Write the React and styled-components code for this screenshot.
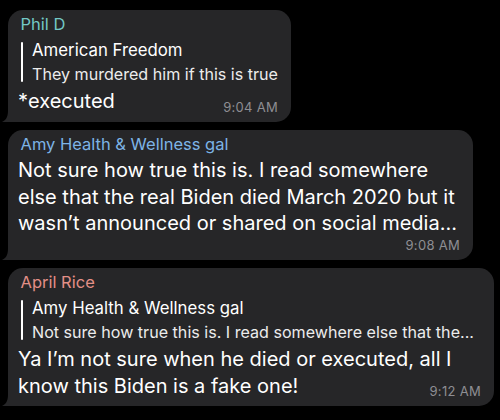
import React from 'react';
import styled, { createGlobalStyle } from 'styled-components';

const GlobalStyle = createGlobalStyle`
  html, body {
    margin: 0;
    background: #000;
  }
  body {
    font-family: "Inter", "Noto Sans", sans-serif;
    -webkit-font-smoothing: antialiased;
  }
`;

const Chat = styled.div`
  display: flex;
  flex-direction: column;
  align-items: flex-start;
  gap: 8px;
  width: 500px;
  height: 420px;
  box-sizing: border-box;
  padding: 10px 0 0 8px;
  overflow: hidden;
`;

const Bubble = styled.div`
  position: relative;
  box-sizing: border-box;
  max-width: ${props => props.$maxWidth}px;
  padding: 4px 13px 7px 10px;
  background: #262628;
  border-radius: 15px 15px 15px 4px;
  color: #fff;
`;

const Tail = styled.svg`
  position: absolute;
  left: -6px;
  bottom: 0;
  display: block;
`;

const Name = styled.div`
  padding-left: 2.5px;
  font-size: 16.5px;
  line-height: 20px;
  color: ${props => props.$color};
  white-space: nowrap;
`;

const Quote = styled.div`
  position: relative;
  margin: 4px 0 0 3px;
  padding-left: 11px;

  &::before {
    content: '';
    position: absolute;
    left: 0;
    top: 4px;
    bottom: 4px;
    width: 2px;
    border-radius: 1px;
    background: #fff;
  }
`;

const QuoteTitle = styled.div`
  font-size: 16.8px;
  line-height: 24px;
  white-space: nowrap;
`;

const QuoteText = styled.div`
  font-size: 16.1px;
  line-height: 24px;
  color: #ececec;
  white-space: nowrap;
  overflow: hidden;
  text-overflow: ellipsis;
`;

const Text = styled.div`
  display: flow-root;
  margin-top: ${props => props.$gap}px;
  font-size: 20px;
  line-height: 26.5px;
`;

const Time = styled.span`
  float: right;
  margin: ${props => props.$drop}px 0 0 10px;
  font-size: 13px;
  line-height: 16px;
  letter-spacing: 0.3px;
  color: #8e8e93;
`;

const messages = [
  {
    name: 'Phil D',
    color: '#73c9c6',
    reply: { title: 'American Freedom', text: 'They murdered him if this is true' },
    text: '*executed',
    time: '9:04 AM',
    drop: 10.8,
    maxWidth: 486,
  },
  {
    name: 'Amy Health & Wellness gal',
    color: '#7db4e6',
    text: 'Not sure how true this is. I read somewhere else that the real Biden died March 2020 but it wasn\u2019t announced or shared on social media...',
    time: '9:08 AM',
    drop: 0,
    maxWidth: 465,
  },
  {
    name: 'April Rice',
    color: '#e38f87',
    reply: {
      title: 'Amy Health & Wellness gal',
      text: 'Not sure how true this is. I read somewhere else that the...',
    },
    text: 'Ya I\u2019m not sure when he died or executed, all I know this Biden is a fake one!',
    time: '9:12 AM',
    drop: 10.8,
    maxWidth: 486,
  },
];

const Message = ({ msg }) => (
  <Bubble $maxWidth={msg.maxWidth}>
    <Tail width="10" height="12" viewBox="0 0 10 12">
      <path d="M6 0 C6 6 5 9.5 0 12 L10 12 L10 0 Z" fill="#262628" />
    </Tail>
    <Name $color={msg.color}>{msg.name}</Name>
    {msg.reply && (
      <Quote>
        <QuoteTitle>{msg.reply.title}</QuoteTitle>
        <QuoteText>{msg.reply.text}</QuoteText>
      </Quote>
    )}
    <Text $gap={msg.reply ? 2.3 : 3.3}>
      {msg.text}
      <Time $drop={msg.drop}>{msg.time}</Time>
    </Text>
  </Bubble>
);

const App = () => (
  <>
    <GlobalStyle />
    <Chat>
      {messages.map(msg => (
        <Message key={msg.time} msg={msg} />
      ))}
    </Chat>
  </>
);

export default App;
